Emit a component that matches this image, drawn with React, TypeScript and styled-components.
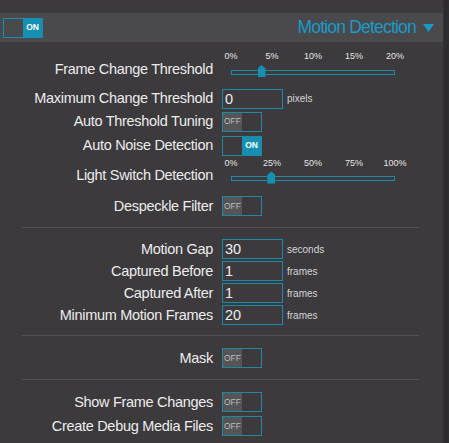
import React, { FC } from 'react';
import styled, { createGlobalStyle } from 'styled-components';

const GlobalStyle = createGlobalStyle`
  html, body {
    margin: 0;
    padding: 0;
    background: #3c3a3d;
    font-family: "Liberation Sans", Arial, sans-serif;
  }
`;

const Page = styled.div`
  display: flex;
  min-height: 443px;
`;

const Panel = styled.div`
  width: 443px;
  flex-shrink: 0;
  background: #3c3a3d;
  padding-top: 13px;
`;

const ScrollStrip = styled.div`
  flex: 1;
  background: #2d2c2e;
  border-left: 1px solid #343335;
`;

const Header = styled.div`
  height: 29px;
  background: #4a494b;
  display: flex;
  align-items: center;
  padding: 0 9px 0 3px;
`;

const Title = styled.div`
  margin-left: auto;
  display: flex;
  align-items: center;
  gap: 7px;
  color: #1b9ac7;
  font-size: 17.5px;
  letter-spacing: -0.8px;
`;

const Body = styled.div`
  padding-top: 9px;
`;

const Row = styled.div<{ $h?: number }>`
  display: grid;
  grid-template-columns: 213px 1fr;
  column-gap: 9px;
  align-items: center;
  height: ${(p) => p.$h ?? 24}px;
`;

const SliderRow = styled.div`
  display: grid;
  grid-template-columns: 213px 1fr;
  column-gap: 9px;
  align-items: end;
  margin-bottom: 5.5px;
`;

const Label = styled.div<{ $lift?: number }>`
  text-align: right;
  color: #ececec;
  font-size: 14.5px;
  letter-spacing: -0.3px;
  line-height: 20px;
  white-space: nowrap;
  margin-bottom: ${(p) => p.$lift ?? 1}px;
`;

const Control = styled.div`
  display: flex;
  align-items: center;
`;

const Input = styled.input`
  width: 61px;
  height: 20px;
  box-sizing: border-box;
  border: 1px solid #1b8aa8;
  background: transparent;
  color: #eeeeee;
  font-family: "Liberation Sans", Arial, sans-serif;
  font-size: 14.5px;
  padding: 0 2px;
  outline: none;
`;

const Unit = styled.span`
  margin-left: 4px;
  color: #d4d4d4;
  font-size: 10px;
`;

const ToggleBox = styled.div`
  width: 40px;
  height: 20px;
  box-sizing: border-box;
  border: 1px solid #22879f;
  display: flex;
`;

const ToggleHalf = styled.div<{ $fill?: string }>`
  width: 50%;
  display: flex;
  align-items: center;
  justify-content: center;
  background: ${(p) => p.$fill ?? 'transparent'};
`;

const OffText = styled.span`
  color: #bdbdbd;
  font-size: 8.5px;
  margin-top: -1px;
`;

const OnText = styled.span`
  color: #ffffff;
  font-size: 8.5px;
  font-weight: bold;
  margin-top: -1px;
`;

const SliderBox = styled.div`
  padding-left: 9px;
  width: 164px;
`;

const Ticks = styled.div`
  position: relative;
  height: 11px;
`;

const Tick = styled.span`
  position: absolute;
  top: 0;
  transform: translateX(-50%);
  color: #e6e6e6;
  font-size: 9px;
  line-height: 11px;
  white-space: nowrap;
`;

const TrackArea = styled.div`
  position: relative;
  height: 20px;
  display: flex;
  align-items: center;
`;

const Track = styled.div`
  width: 100%;
  height: 5px;
  box-sizing: border-box;
  border: 1px solid #1b8aa8;
`;

const Handle = styled.div`
  position: absolute;
  top: 3px;
  width: 8px;
  height: 12px;
  transform: translateX(-50%);
  background: #1590b3;
  clip-path: polygon(50% 0, 100% 28%, 100% 100%, 0 100%, 0 28%);
`;

const Separator = styled.hr`
  border: none;
  height: 1px;
  background: #525153;
  margin: 8.5px 24px 10.5px 22px;
`;

const Toggle: FC<{ on?: boolean }> = ({ on }) => (
  <ToggleBox>
    {on ? (
      <>
        <ToggleHalf $fill="#3c3a3d" />
        <ToggleHalf $fill="#1590b3">
          <OnText>ON</OnText>
        </ToggleHalf>
      </>
    ) : (
      <>
        <ToggleHalf $fill="#555456">
          <OffText>OFF</OffText>
        </ToggleHalf>
        <ToggleHalf />
      </>
    )}
  </ToggleBox>
);

const HeaderToggle = styled(ToggleBox)`
  border-color: #1590b3;
`;

const Slider: FC<{ ticks: string[]; value: number }> = ({ ticks, value }) => (
  <SliderBox>
    <Ticks>
      {ticks.map((t, i) => (
        <Tick key={t} style={{ left: `${(i / (ticks.length - 1)) * 100}%` }}>
          {t}
        </Tick>
      ))}
    </Ticks>
    <TrackArea>
      <Track />
      <Handle style={{ left: `${value}%` }} />
    </TrackArea>
  </SliderBox>
);

const App: FC = () => (
  <Page>
    <GlobalStyle />
    <Panel>
      <Header>
        <HeaderToggle>
          <ToggleHalf $fill="#4a494b" />
          <ToggleHalf $fill="#1590b3">
            <OnText>ON</OnText>
          </ToggleHalf>
        </HeaderToggle>
        <Title>
          Motion Detection
          <svg width="11" height="8" viewBox="0 0 11 8">
            <polygon points="0,0 11,0 5.5,8" fill="#1b9ac7" />
          </svg>
        </Title>
      </Header>
      <Body>
        <SliderRow>
          <Label $lift={3}>Frame Change Threshold</Label>
          <Slider ticks={['0%', '5%', '10%', '15%', '20%']} value={18.6} />
        </SliderRow>
        <Row $h={22}>
          <Label>Maximum Change Threshold</Label>
          <Control>
            <Input defaultValue="0" />
            <Unit>pixels</Unit>
          </Control>
        </Row>
        <Row>
          <Label>Auto Threshold Tuning</Label>
          <Control>
            <Toggle />
          </Control>
        </Row>
        <Row>
          <Label>Auto Noise Detection</Label>
          <Control>
            <Toggle on />
          </Control>
        </Row>
        <SliderRow>
          <Label $lift={4}>Light Switch Detection</Label>
          <Slider ticks={['0%', '25%', '50%', '75%', '100%']} value={24.6} />
        </SliderRow>
        <Row>
          <Label>Despeckle Filter</Label>
          <Control>
            <Toggle />
          </Control>
        </Row>
        <Separator />
        <Row $h={22}>
          <Label>Motion Gap</Label>
          <Control>
            <Input defaultValue="30" />
            <Unit>seconds</Unit>
          </Control>
        </Row>
        <Row $h={22}>
          <Label>Captured Before</Label>
          <Control>
            <Input defaultValue="1" />
            <Unit>frames</Unit>
          </Control>
        </Row>
        <Row $h={22}>
          <Label>Captured After</Label>
          <Control>
            <Input defaultValue="1" />
            <Unit>frames</Unit>
          </Control>
        </Row>
        <Row $h={22}>
          <Label>Minimum Motion Frames</Label>
          <Control>
            <Input defaultValue="20" />
            <Unit>frames</Unit>
          </Control>
        </Row>
        <Separator />
        <Row>
          <Label>Mask</Label>
          <Control>
            <Toggle />
          </Control>
        </Row>
        <Separator />
        <Row>
          <Label>Show Frame Changes</Label>
          <Control>
            <Toggle />
          </Control>
        </Row>
        <Row>
          <Label>Create Debug Media Files</Label>
          <Control>
            <Toggle />
          </Control>
        </Row>
      </Body>
    </Panel>
    <ScrollStrip />
  </Page>
);

export default App;
